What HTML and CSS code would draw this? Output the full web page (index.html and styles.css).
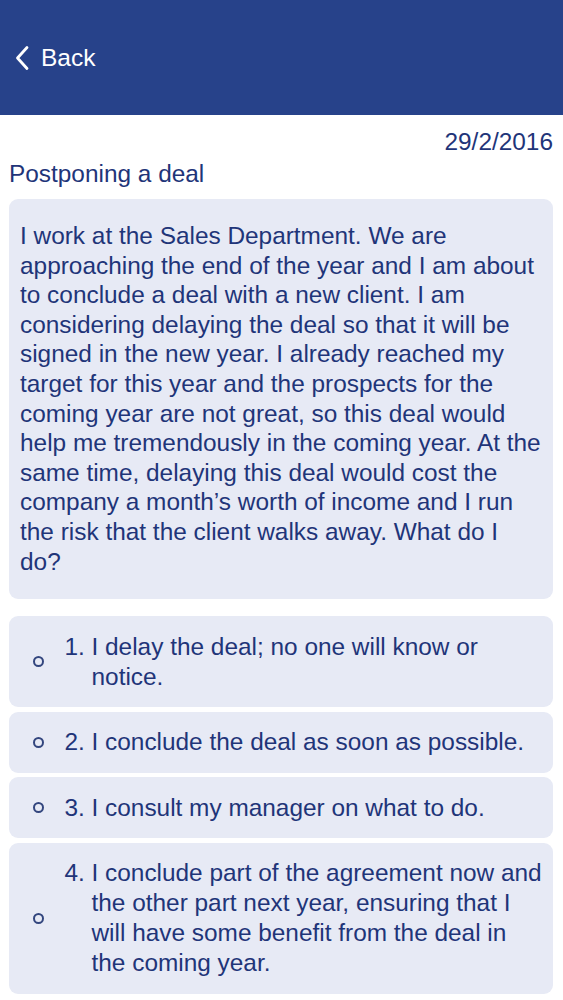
FILE: index.html
```html
<!DOCTYPE html>
<html>
<head>
<meta charset="utf-8">
<link rel="stylesheet" href="styles.css">
</head>
<body>
<header class="topbar">
  <a class="back">
    <svg class="chev" width="16" height="26" viewBox="0 0 16 26"><path d="M13 2.5 L3.5 13 L13 23.5" fill="none" stroke="#fff" stroke-width="2.8" stroke-linecap="round" stroke-linejoin="round"/></svg>
    <span>Back</span>
  </a>
</header>
<main class="content">
  <div class="date">29/2/2016</div>
  <h1 class="title">Postponing a deal</h1>
  <div class="card question">I work at the Sales Department. We are approaching the end of the year and I am about to conclude a deal with a new client. I am considering delaying the deal so that it will be signed in the new year. I already reached my target for this year and the prospects for the coming year are not great, so this deal would help me tremendously in the coming year. At the same time, delaying this deal would cost the company a month’s worth of income and I run the risk that the client walks away. What do I do?</div>
  <div class="options">
    <div class="card option"><span class="radio"></span><span class="num">1.</span><span class="txt">I delay the deal; no one will know or notice.</span></div>
    <div class="card option"><span class="radio"></span><span class="num">2.</span><span class="txt">I conclude the deal as soon as possible.</span></div>
    <div class="card option"><span class="radio"></span><span class="num">3.</span><span class="txt">I consult my manager on what to do.</span></div>
    <div class="card option"><span class="radio"></span><span class="num">4.</span><span class="txt">I conclude part of the agreement now and the other part next year, ensuring that I will have some benefit from the deal in the coming year.</span></div>
  </div>
</main>
</body>
</html>
```
FILE: styles.css
```css
* { box-sizing: border-box; }
html, body { margin: 0; padding: 0; background: #fff; }
body { font-family: "Liberation Sans", Arial, sans-serif; color: #1f3579; }
.topbar {
  height: 115px;
  background: #27428a;
  display: flex;
  align-items: center;
  padding-left: 14px;
}
.back { display: flex; align-items: center; gap: 11px; color: #fff; font-size: 24.5px; }
.chev { display: block; }
.content { padding: 0 10px 0 9px; }
.date { text-align: right; font-size: 24.4px; margin-top: 13px; line-height: 28px; }
.title { font-weight: normal; font-size: 24.4px; margin: 3px 0 0; line-height: 29px; }
.card { background: #e7eaf5; border-radius: 9px; }
.question {
  margin-top: 11px;
  padding: 22px 11px 23px 11px;
  font-size: 24.4px;
  line-height: 29.6px;
}
.options { display: flex; flex-direction: column; gap: 4.5px; margin-top: 17px; }
.option {
  display: flex;
  align-items: flex-start;
  padding: 15.5px 8px 15.5px 0;
  font-size: 24.4px;
  line-height: 30px;
}
.radio {
  width: 11px; height: 11px;
  border: 2px solid #33467e;
  border-radius: 50%;
  align-self: center;
  margin-left: 23.5px;
  margin-right: 21px;
  flex: none;
}
.num { width: 27px; flex: none; }
.txt { flex: 1; }
```
